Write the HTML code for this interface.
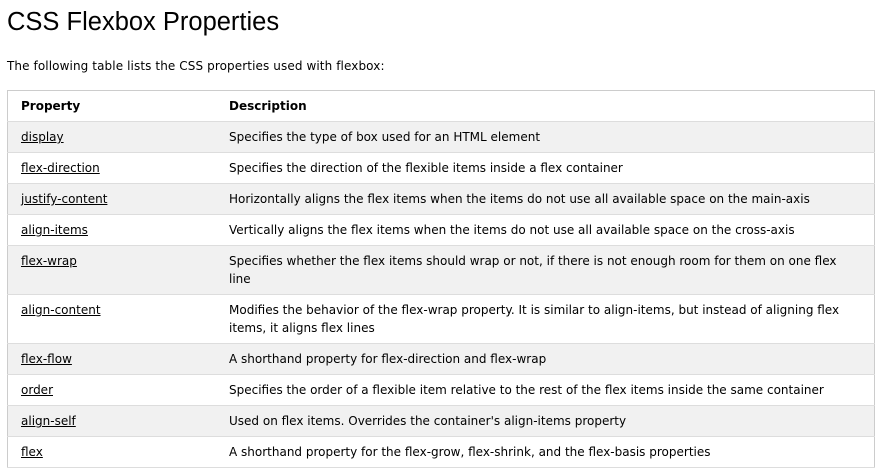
<!DOCTYPE html>
<html><head><meta charset="utf-8"><style>
body{margin:0;background:#fff;color:#000;font-family:Verdana,"DejaVu Sans",sans-serif;font-size:12px;width:883px;height:473px;overflow:hidden}
h1{font-family:"Liberation Sans",Arial,sans-serif;font-weight:normal;font-size:25.5px;margin:0;position:absolute;left:7px;top:6px;line-height:32px}
p{position:absolute;left:7px;top:57px;margin:0;line-height:18px;letter-spacing:0.1px}
table{position:absolute;left:7px;top:90px;width:868px;border-collapse:collapse;border:1px solid #ccc}
td,th{padding:6px 8px 6px 13px;line-height:18px;text-align:left;vertical-align:top;border-bottom:1px solid #ddd}
th{font-weight:bold}
td:first-child,th:first-child{width:187px}
tr:nth-child(even){background:#f1f1f1}
a{color:#000;text-decoration:underline}
</style></head><body>
<h1>CSS Flexbox Properties</h1>
<p>The following table lists the CSS properties used with flexbox:</p>
<table>
<tr><th>Property</th><th>Description</th></tr>
<tr><td><a>display</a></td><td>Specifies the type of box used for an HTML element</td></tr>
<tr><td><a>flex-direction</a></td><td>Specifies the direction of the flexible items inside a flex container</td></tr>
<tr><td><a>justify-content</a></td><td>Horizontally aligns the flex items when the items do not use all available space on the main-axis</td></tr>
<tr><td><a>align-items</a></td><td>Vertically aligns the flex items when the items do not use all available space on the cross-axis</td></tr>
<tr><td><a>flex-wrap</a></td><td>Specifies whether the flex items should wrap or not, if there is not enough room for them on one flex<br>line</td></tr>
<tr><td><a>align-content</a></td><td>Modifies the behavior of the flex-wrap property. It is similar to align-items, but instead of aligning flex<br>items, it aligns flex lines</td></tr>
<tr><td><a>flex-flow</a></td><td>A shorthand property for flex-direction and flex-wrap</td></tr>
<tr><td><a>order</a></td><td>Specifies the order of a flexible item relative to the rest of the flex items inside the same container</td></tr>
<tr><td><a>align-self</a></td><td>Used on flex items. Overrides the container's align-items property</td></tr>
<tr><td><a>flex</a></td><td>A shorthand property for the flex-grow, flex-shrink, and the flex-basis properties</td></tr>
</table>
</body></html>
